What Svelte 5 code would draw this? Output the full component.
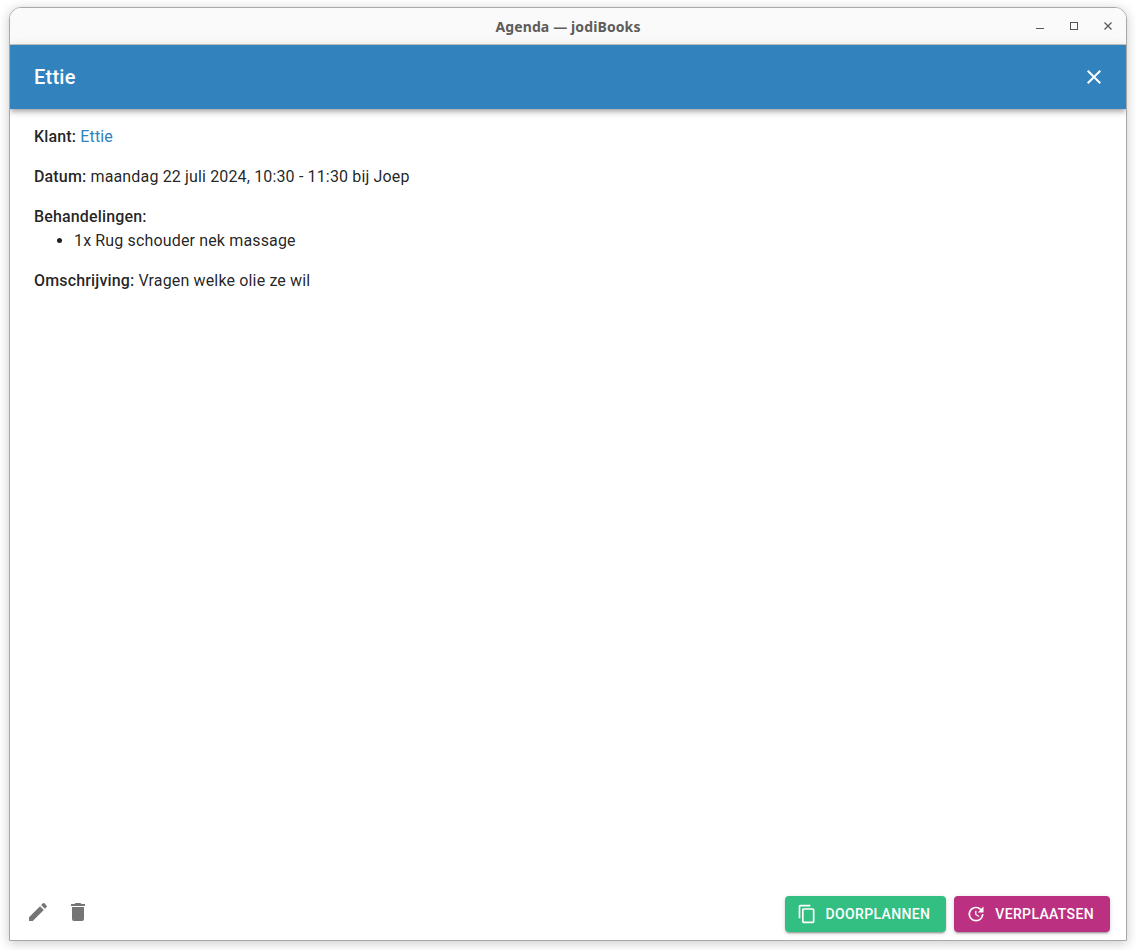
<script>
	const buttons = [
		{
			label: 'Doorplannen',
			color: 'green',
			icon: 'M19,21H8V7H19M19,5H8A2,2 0 0,0 6,7V21A2,2 0 0,0 8,23H19A2,2 0 0,0 21,21V7A2,2 0 0,0 19,5M16,1H4A2,2 0 0,0 2,3V17H4V3H16V1Z'
		},
		{
			label: 'Verplaatsen',
			color: 'magenta',
			icon: 'M21,10.12H14.22L16.96,7.3C14.23,4.6 9.81,4.5 7.08,7.2C4.35,9.91 4.35,14.28 7.08,17C9.81,19.7 14.23,19.7 16.96,17C18.32,15.65 19,14.08 19,12.1H21C21,14.08 20.12,16.65 18.36,18.39C14.85,21.87 9.15,21.87 5.64,18.39C2.14,14.92 2.11,9.28 5.62,5.81C9.13,2.34 14.76,2.34 18.27,5.81L21,3V10.12M12.5,8V12.25L16,14.33L15.28,15.54L11,13V8H12.5Z'
		}
	];
</script>

<div class="desktop">
	<div class="window">
		<header class="titlebar">
			<span class="title">Agenda — jodiBooks</span>
			<div class="controls">
				<svg width="12" height="12" viewBox="0 0 12 12"><path d="M2 8.5h8" stroke="#555" fill="none" /></svg>
				<svg width="12" height="12" viewBox="0 0 12 12"><rect x="2.5" y="2.5" width="7" height="7" stroke="#555" fill="none" /></svg>
				<svg width="12" height="12" viewBox="0 0 12 12"><path d="M2.5 2.5l7 7M9.5 2.5l-7 7" stroke="#555" stroke-width="1.2" fill="none" /></svg>
			</div>
		</header>

		<div class="toolbar">
			<h1>Ettie</h1>
			<button class="close" aria-label="Sluiten">
				<svg width="24" height="24" viewBox="0 0 24 24"><path fill="currentColor" d="M19,6.41L17.59,5L12,10.59L6.41,5L5,6.41L10.59,12L5,17.59L6.41,19L12,13.41L17.59,19L19,17.59L13.41,12L19,6.41Z" /></svg>
			</button>
		</div>

		<main class="content">
			<p><strong>Klant:</strong> <a href="#klant">Ettie</a></p>
			<p><strong>Datum:</strong> maandag 22 juli 2024, 10:30 - 11:30 bij Joep</p>
			<div class="block">
				<strong>Behandelingen:</strong>
				<ul>
					<li>1x Rug schouder nek massage</li>
				</ul>
			</div>
			<p><strong>Omschrijving:</strong> Vragen welke olie ze wil</p>
		</main>

		<footer class="actions">
			<div class="icon-actions">
				<button class="icon-btn" aria-label="Bewerken">
					<svg width="24" height="24" viewBox="0 0 24 24"><path fill="currentColor" d="M20.71,7.04C21.1,6.65 21.1,6 20.71,5.63L18.37,3.29C18,2.9 17.35,2.9 16.96,3.29L15.12,5.12L18.87,8.87M3,17.25V21H6.75L17.81,9.93L14.06,6.18L3,17.25Z" /></svg>
				</button>
				<button class="icon-btn" aria-label="Verwijderen">
					<svg width="24" height="24" viewBox="0 0 24 24"><path fill="currentColor" d="M19,4H15.5L14.5,3H9.5L8.5,4H5V6H19M6,19A2,2 0 0,0 8,21H16A2,2 0 0,0 18,19V7H6V19Z" /></svg>
				</button>
			</div>
			<div class="main-actions">
				{#each buttons as b}
					<button class="btn {b.color}">
						<svg width="20" height="20" viewBox="0 0 24 24"><path fill="currentColor" d={b.icon} /></svg>
						{b.label}
					</button>
				{/each}
			</div>
		</footer>
	</div>
</div>

<style>
	:global(body) {
		margin: 0;
		background: #fff;
	}

	.desktop {
		box-sizing: border-box;
		width: 1136px;
		height: 950px;
		padding: 7px 9px 9px;
		background: #fff;
		overflow: hidden;
	}

	.window {
		box-sizing: border-box;
		height: 100%;
		display: flex;
		flex-direction: column;
		background: #fff;
		border: 1px solid #a9a9a9;
		border-radius: 12px 12px 0 0;
		box-shadow: 0 2px 12px rgba(0, 0, 0, 0.22);
		overflow: hidden;
		font-family: Roboto, sans-serif;
		font-size: 16px;
		line-height: 24px;
		color: rgba(0, 0, 0, 0.87);
	}

	.titlebar {
		position: relative;
		flex: none;
		height: 36px;
		display: flex;
		align-items: center;
		justify-content: center;
		background: #fafafa;
		border-bottom: 1px solid #c9c9c9;
	}

	.title {
		padding-top: 2px;
		font-family: 'Noto Sans', sans-serif;
		font-size: 14px;
		font-weight: 700;
		letter-spacing: 0.12px;
		color: #5e5c5a;
	}

	.controls {
		position: absolute;
		right: 12px;
		top: 12px;
		display: flex;
		gap: 22px;
		line-height: 0;
	}

	.toolbar {
		position: relative;
		flex: none;
		height: 64px;
		display: flex;
		align-items: center;
		justify-content: space-between;
		padding: 0 20px 0 24px;
		background: #3182bd;
		color: #fff;
		box-shadow: 0 2px 4px -1px rgba(0, 0, 0, 0.2), 0 4px 5px rgba(0, 0, 0, 0.14), 0 1px 10px rgba(0, 0, 0, 0.12);
	}

	h1 {
		margin: 0;
		font-size: 20px;
		font-weight: 500;
		letter-spacing: 0.0125em;
	}

	button {
		border: none;
		background: none;
		padding: 0;
		font: inherit;
		color: inherit;
		cursor: pointer;
	}

	.close {
		line-height: 0;
	}

	.content {
		flex: 1;
		padding: 16px 24px 0;
		letter-spacing: 0.15px;
	}

	p {
		margin: 0 0 16px;
	}

	strong {
		font-weight: 500;
	}

	a {
		color: #3182bd;
		text-decoration: none;
	}

	.block {
		margin-bottom: 16px;
	}

	ul {
		margin: 0;
		padding-left: 40px;
	}

	.actions {
		flex: none;
		display: flex;
		justify-content: space-between;
		align-items: flex-start;
		padding: 0 16px 8px 16px;
	}

	.icon-actions {
		display: flex;
		gap: 16px;
		padding-top: 4px;
		line-height: 0;
		color: #757575;
	}

	.icon-btn {
		width: 24px;
		height: 24px;
	}

	.main-actions {
		display: flex;
		gap: 8px;
	}

	.btn {
		display: flex;
		align-items: center;
		gap: 9px;
		height: 36px;
		padding: 0 16px 0 12px;
		border-radius: 4px;
		color: #fff;
		font-size: 14px;
		font-weight: 500;
		letter-spacing: 0.35px;
		text-transform: uppercase;
		box-shadow: 0 3px 1px -2px rgba(0, 0, 0, 0.2), 0 2px 2px rgba(0, 0, 0, 0.14), 0 1px 5px rgba(0, 0, 0, 0.12);
	}

	.green {
		background: #33be82;
	}

	.magenta {
		background: #bc3081;
	}
</style>
